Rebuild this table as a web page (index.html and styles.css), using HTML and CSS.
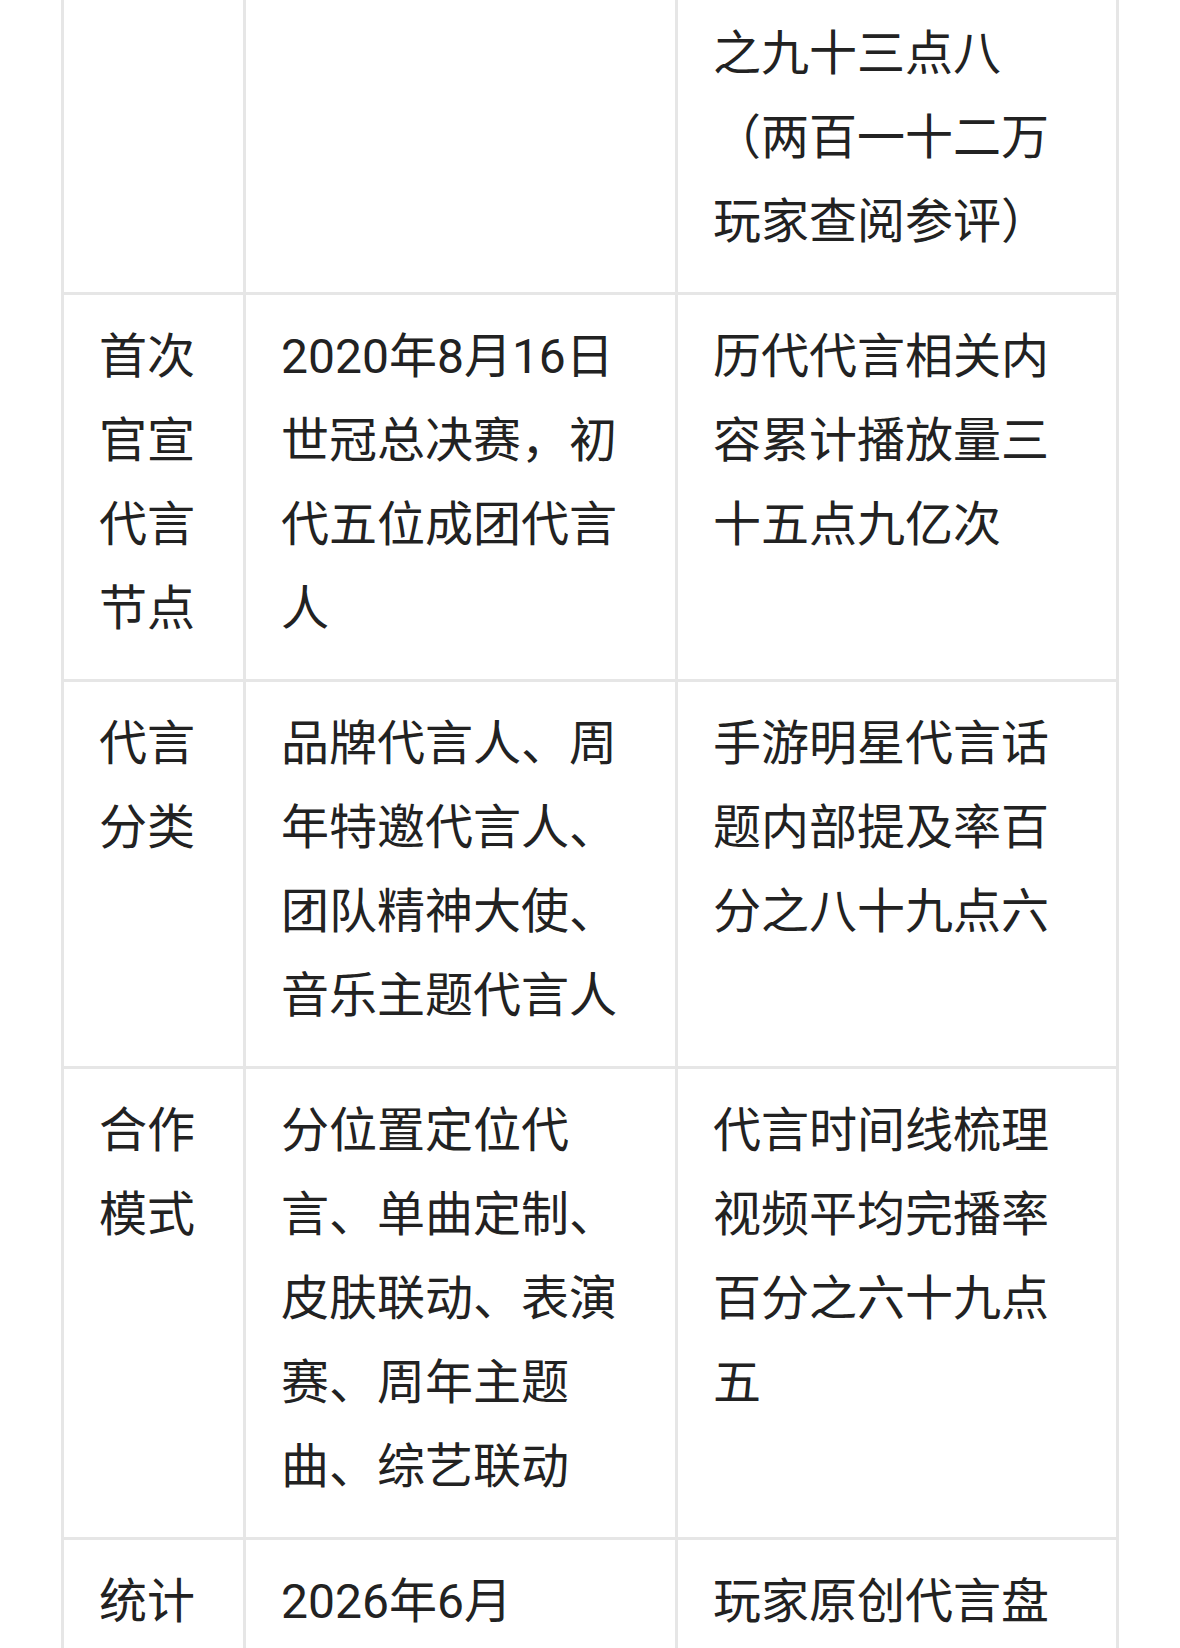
FILE: index.html
```html
<!DOCTYPE html>
<html lang="zh-CN">
<head>
<meta charset="utf-8">
<title>代言信息表</title>
<link rel="stylesheet" href="styles.css">
</head>
<body>
<div class="sheet">
  <div class="cell label"></div>
  <div class="cell"></div>
  <div class="cell">之九十三点八（两百一十二万玩家查阅参评）</div>

  <div class="cell label">首次官宣代言节点</div>
  <div class="cell">2020年8月16日世冠总决赛，初代五位成团代言人</div>
  <div class="cell">历代代言相关内容累计播放量三十五点九亿次</div>

  <div class="cell label">代言分类</div>
  <div class="cell">品牌代言人、周年特邀代言人、团队精神大使、音乐主题代言人</div>
  <div class="cell">手游明星代言话题内部提及率百分之八十九点六</div>

  <div class="cell label">合作模式</div>
  <div class="cell">分位置定位代言、单曲定制、皮肤联动、表演赛、周年主题曲、综艺联动</div>
  <div class="cell">代言时间线梳理视频平均完播率百分之六十九点五</div>

  <div class="cell label">统计</div>
  <div class="cell">2026年6月</div>
  <div class="cell">玩家原创代言盘</div>
</div>
</body>
</html>
```

FILE: styles.css
```css
html, body {
  margin: 0;
  padding: 0;
  background: #ffffff;
}

body {
  font-family: Roboto, "Noto Sans CJK SC", sans-serif;
  font-size: 48px;
  line-height: 84px;
  color: #222222;
  text-spacing-trim: space-all;
  text-autospace: no-autospace;
}

.sheet {
  display: grid;
  grid-template-columns: 179px 429px 438px;
  gap: 3px;
  padding: 3px;
  width: max-content;
  margin: -11px 0 0 61px;
  background: #e6e6e6;
}

.cell {
  background: #ffffff;
  padding: 20px 35px 28px 35px;
  word-break: normal;
  line-break: strict;
}
```
